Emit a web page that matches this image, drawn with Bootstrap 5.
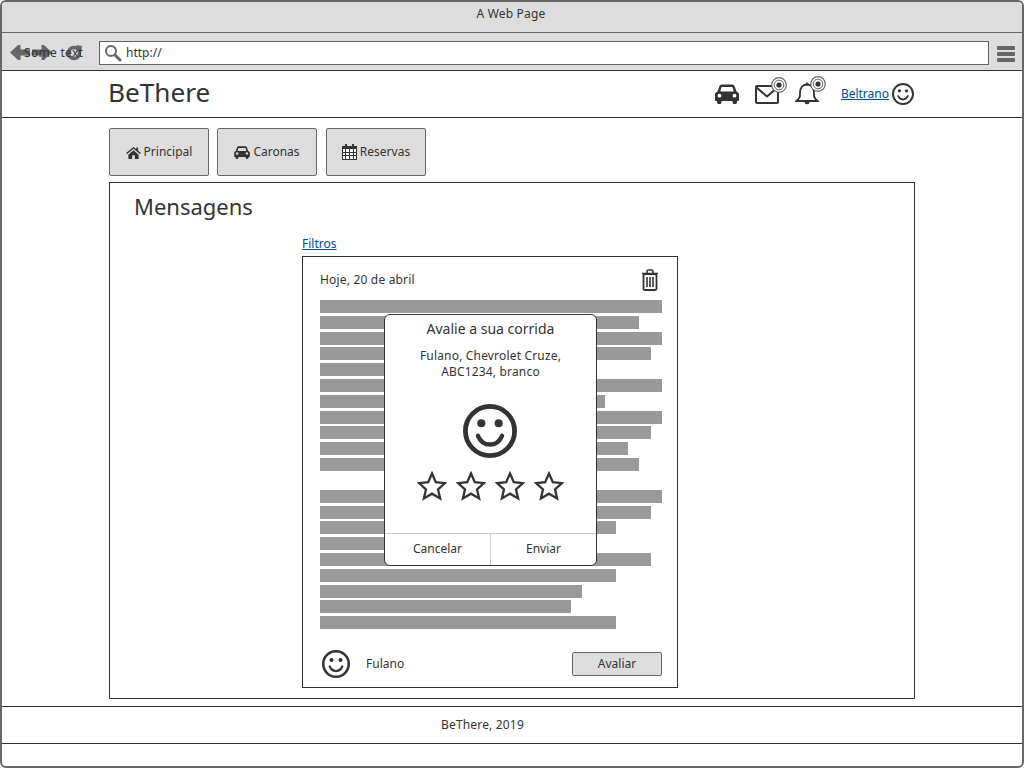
<!DOCTYPE html>
<html lang="pt">
<head>
<meta charset="utf-8">
<title>BeThere</title>
<link href="https://cdn.jsdelivr.net/npm/bootstrap@5.3.0/dist/css/bootstrap.min.css" rel="stylesheet">
<style>
html,body{margin:0;height:768px;overflow:hidden;background:#fff}
body{font-family:"Noto Sans","Liberation Sans",sans-serif;font-size:12px;color:#333;line-height:16px}
a{color:#004a8f}
svg{display:block;flex:none}
.win{width:1024px;height:768px;border:2px solid #666;border-radius:6px;overflow:hidden;display:flex;flex-direction:column;background:#fff}
.titlebar{height:31px;background:#ddd;text-align:center;padding-top:4px;padding-right:2px;border-bottom:1px solid #666;flex:none;letter-spacing:.2px}
.urlbar{height:38px;background:#ddd;border-bottom:1px solid #333;flex:none;position:relative;padding:8px 7px 0 8px}
.sometext{position:absolute;left:22px;top:12px;letter-spacing:.3px}
.navglyphs{width:89px;padding-top:3px}
.urlfield{width:890px;height:24px;background:#fff;border:1px solid #666;padding:0 4px;gap:4px}
.burger{width:18px;margin-left:8px;gap:2px;margin-top:5px}
.burger i{display:block;height:4px;background:#666;border-radius:1px}
.apphead{height:47px;border-bottom:1px solid #333;flex:none;padding:0 108px 0 106px}
.brand{font-size:26.2px;line-height:40px;color:#333;margin-top:1px}
.env-wrap{margin-left:16px;position:relative}
.bell-wrap{margin-left:16px;position:relative}
.ring-a{position:absolute;left:16px;top:-7px}
.ring-b{position:absolute;left:15px;top:-6px}
.usr{margin-left:22px;gap:3px}
.body-area{flex:1;padding:10px 107px 0}
.tab-box{width:100px;height:48px;background:#ddd;border:1px solid #666;border-radius:2px;gap:3px;color:#333;font-size:12px;margin-right:8px}
.tab-box:nth-child(2){margin-right:9px}
.panel-box{height:517px;width:806px;border:1px solid #333;margin-top:6px}
.heading{font-size:22px;line-height:28px;margin:9px 0 0 24px;font-weight:400;color:#333}
.filtros{margin:15px 0 0 192px;height:18px;line-height:18px}
.msg{position:relative;width:376px;height:432px;margin:3px 0 0 192px;border:1px solid #333;padding:0 15px 0 17px}
.msg-top{height:43px;align-items:center;padding:2px 3px 0 0;letter-spacing:.18px}
.bar{height:13px;background:#999;margin-bottom:2.8px}
.bars-gap{height:16px}
.msg-foot{position:absolute;left:17px;right:15px;bottom:9px;height:28px;align-items:center}
.face-small{margin-left:2px}
.foot-name{margin-left:16px}
.avaliar{width:90px;height:24px;background:#ddd;border:1px solid #666;border-radius:2px;margin-left:auto;text-align:center;line-height:22px}
.rate{position:absolute;left:81px;top:57px;width:213px;height:252px;background:#fff;border:1px solid #333;border-radius:6px;text-align:center;overflow:hidden;display:flex;flex-direction:column}
.rate h3{font-size:14px;line-height:18px;font-weight:400;margin:5px 0 0;color:#333}
.rate p{margin:10px 0 0;line-height:16px;letter-spacing:.17px}
.face-big{margin-top:24px;padding-right:2px}
.stars{margin-top:13px;padding:0 32px;justify-content:space-between}
.rate-foot{margin-top:auto;height:32px;border-top:1px solid #ccc}
.rate-foot div{flex:1;line-height:30px}
.rate-foot div+div{border-left:1px solid #ccc}
.foot{height:38px;margin-top:7px;border-top:1px solid #333;border-bottom:1px solid #333;line-height:35px;flex:none;padding-left:439px;letter-spacing:.17px}
.foot-space{height:22px;flex:none}
</style>
</head>
<body>
<svg width="0" height="0" style="position:absolute">
  <defs>
    <symbol id="smile" viewBox="0 0 56 56">
      <circle cx="28" cy="28" r="25.5" fill="none" stroke="#333" stroke-width="5"/>
      <circle cx="19" cy="20" r="4.2" fill="#333"/><circle cx="37" cy="20" r="4.2" fill="#333"/>
      <path d="M15.5 33c2.5 6 7 9 12.500 9s10-3 12.500-9" fill="none" stroke="#333" stroke-width="4.500" stroke-linecap="round"/>
    </symbol>
    <symbol id="car" viewBox="0 0 24 20">
      <path fill="#333" d="M7 .5h10c1.300 0 2.200.7 2.700 1.900L21.500 7.500c1.500.6 2.500 1.700 2.500 3V16c0 .6-.4 1-1 1h-1v1.200c0 1-.8 1.800-1.800 1.800h-.9c-1 0-1.800-.8-1.800-1.800V17H6.500v1.200c0 1-.8 1.800-1.800 1.800h-.9C2.800 20 2 19.200 2 18.200V17H1c-.6 0-1-.4-1-1v-5.500c0-1.300 1-2.400 2.500-3l1.800-5.100C4.800 1.200 5.700.5 7 .5zm.3 2.500c-.5 0-.8.2-1 .7L5.300 7.500h13.400l-1-3.800c-.2-.5-.5-.7-1-.7H7.300zM4.500 9.800a1.900 1.900 0 1 0 0 3.800 1.900 1.900 0 0 0 0-3.800zm15 0a1.900 1.900 0 1 0 0 3.800 1.900 1.900 0 0 0 0-3.800z"/>
    </symbol>
    <symbol id="star" viewBox="0 0 30 30">
      <path d="M15 2.500l3.800 8.700 9.200.9-7 6.200 2.100 9.200-8.100-4.800-8.100 4.800 2.100-9.200-7-6.200 9.200-.9z" fill="#fff" stroke="#333" stroke-width="2.300" stroke-linejoin="miter"/>
    </symbol>
    <symbol id="ring" viewBox="0 0 16 16">
      <circle cx="8" cy="8" r="7.300" fill="#fff" stroke="#666" stroke-width="1.200"/>
      <circle cx="8" cy="8" r="4.800" fill="none" stroke="#666" stroke-width="1"/>
      <circle cx="8" cy="8" r="2.600" fill="#333"/>
    </symbol>
  </defs>
</svg>
<div class="win">
  <div class="titlebar">A Web Page</div>
  <div class="urlbar d-flex">
    <div class="navglyphs">
      <svg width="74" height="18" viewBox="0 0 74 18"><path fill="#666" d="M0 8.500L8 1h2.500v4.500H20v6h-9.500V16H8z"/><path fill="#666" d="M42 8.500L34 1h-2.500v4.500H22v6h9.500V16H34z"/><circle cx="64" cy="9" r="5.500" fill="none" stroke="#666" stroke-width="3.500"/><path fill="#666" d="M66 1l6 1-1 6z"/></svg>
    </div>
    <span class="sometext">Some text</span>
    <div class="urlfield d-flex align-items-center">
      <svg width="18" height="18" viewBox="0 0 18 18"><circle cx="7" cy="7" r="5" fill="none" stroke="#666" stroke-width="2"/><path d="M11 11l5 5" stroke="#666" stroke-width="3" stroke-linecap="round"/></svg>
      <span>http://</span>
    </div>
    <div class="burger d-flex flex-column"><i></i><i></i><i></i></div>
  </div>
  <header class="apphead d-flex justify-content-between">
    <div class="brand">BeThere</div>
    <div class="d-flex align-items-center">
      <svg width="24" height="20"><use href="#car"/></svg>
      <div class="env-wrap">
        <svg width="24" height="20" viewBox="0 0 24 20"><rect x="1" y="2" width="22" height="17" rx="1" fill="#fff" stroke="#333" stroke-width="2"/><path d="M1.500 3.500l10.500 9 10.500-9" fill="none" stroke="#333" stroke-width="2"/></svg>
        <svg class="ring-a" width="16" height="16"><use href="#ring"/></svg>
      </div>
      <div class="bell-wrap">
        <svg width="24" height="24" viewBox="0 0 24 24"><path d="M12 2.500c-4.500 0-7 3.500-7 8v3c0 2-1.800 4-3.500 5.500h21c-1.700-1.500-3.500-3.500-3.500-5.500v-3c0-4.500-2.500-8-7-8z" fill="#fff" stroke="#333" stroke-width="1.800"/><path d="M9.500 20c0 3 5 3 5 0" fill="#333"/><circle cx="12" cy="2" r="1.500" fill="#333"/></svg>
        <svg class="ring-b" width="16" height="16"><use href="#ring"/></svg>
      </div>
      <div class="usr d-flex align-items-center">
        <a href="#">Beltrano</a>
        <svg width="22" height="22"><use href="#smile"/></svg>
      </div>
    </div>
  </header>
  <main class="body-area">
    <div class="d-flex">
      <div class="tab-box d-flex align-items-center justify-content-center">
        <svg width="15" height="13" viewBox="0 0 16 14"><path fill="#333" d="M8 1L0 7.500l1 1.200L8 3l7 5.700 1-1.200-3-2.400V1.500h-2v2zM2.500 9.300V14h4v-4h3v4h4V9.300L8 4.500z"/></svg>
        <span>Principal</span>
      </div>
      <div class="tab-box d-flex align-items-center justify-content-center">
        <svg width="16" height="13"><use href="#car"/></svg>
        <span>Caronas</span>
      </div>
      <div class="tab-box d-flex align-items-center justify-content-center">
        <svg width="15" height="16" viewBox="0 0 15 16"><rect x=".5" y="2.500" width="14" height="13" fill="#fff" stroke="#333"/><path fill="#333" d="M0 2h15v3H0zM3 0h2v3H3zm7 0h2v3h-2z"/><path stroke="#333" d="M0 8.500h15M0 11.500h15M3.500 5v11M7.500 5v11M11.500 5v11"/></svg>
        <span>Reservas</span>
      </div>
    </div>
    <section class="panel-box">
      <h1 class="heading">Mensagens</h1>
      <div class="filtros"><a href="#">Filtros</a></div>
      <div class="msg">
        <div class="msg-top d-flex justify-content-between">
          <span>Hoje, 20 de abril</span>
          <svg width="18" height="22" viewBox="0 0 18 22"><path d="M1 4.500h16M6 4V2.500C6 1.700 6.700 1 7.500 1h3c.8 0 1.500.7 1.500 1.500V4" fill="none" stroke="#333" stroke-width="1.600"/><rect x="2.500" y="5" width="13" height="16" rx="1.500" fill="none" stroke="#333" stroke-width="1.800"/><path d="M6 8v10M9 8v10M12 8v10" stroke="#333" stroke-width="1.600"/></svg>
        </div>
        <div class="bars">
          <div class="bar" style="width:342px"></div>
          <div class="bar" style="width:319px"></div>
          <div class="bar" style="width:342px"></div>
          <div class="bar" style="width:331px"></div>
          <div class="bar" style="width:250px"></div>
          <div class="bar" style="width:342px"></div>
          <div class="bar" style="width:285px"></div>
          <div class="bar" style="width:342px"></div>
          <div class="bar" style="width:331px"></div>
          <div class="bar" style="width:308px"></div>
          <div class="bar" style="width:319px"></div>
          <div class="bars-gap"></div>
          <div class="bar" style="width:342px"></div>
          <div class="bar" style="width:331px"></div>
          <div class="bar" style="width:296px"></div>
          <div class="bar" style="width:250px"></div>
          <div class="bar" style="width:331px"></div>
          <div class="bar" style="width:296px"></div>
          <div class="bar" style="width:262px"></div>
          <div class="bar" style="width:251px"></div>
          <div class="bar" style="width:296px"></div>
        </div>
        <div class="msg-foot d-flex">
          <svg class="face-small" width="28" height="28"><use href="#smile"/></svg>
          <span class="foot-name">Fulano</span>
          <div class="avaliar">Avaliar</div>
        </div>
        <div class="rate">
          <h3>Avalie a sua corrida</h3>
          <p>Fulano, Chevrolet Cruze,<br>ABC1234, branco</p>
          <div class="face-big d-flex justify-content-center"><svg width="54" height="54"><use href="#smile"/></svg></div>
          <div class="stars d-flex">
            <svg width="30" height="30"><use href="#star"/></svg>
            <svg width="30" height="30"><use href="#star"/></svg>
            <svg width="30" height="30"><use href="#star"/></svg>
            <svg width="30" height="30"><use href="#star"/></svg>
          </div>
          <div class="rate-foot d-flex"><div>Cancelar</div><div>Enviar</div></div>
        </div>
      </div>
    </section>
  </main>
  <footer class="foot">BeThere, 2019</footer>
  <div class="foot-space"></div>
</div>
</body>
</html>
